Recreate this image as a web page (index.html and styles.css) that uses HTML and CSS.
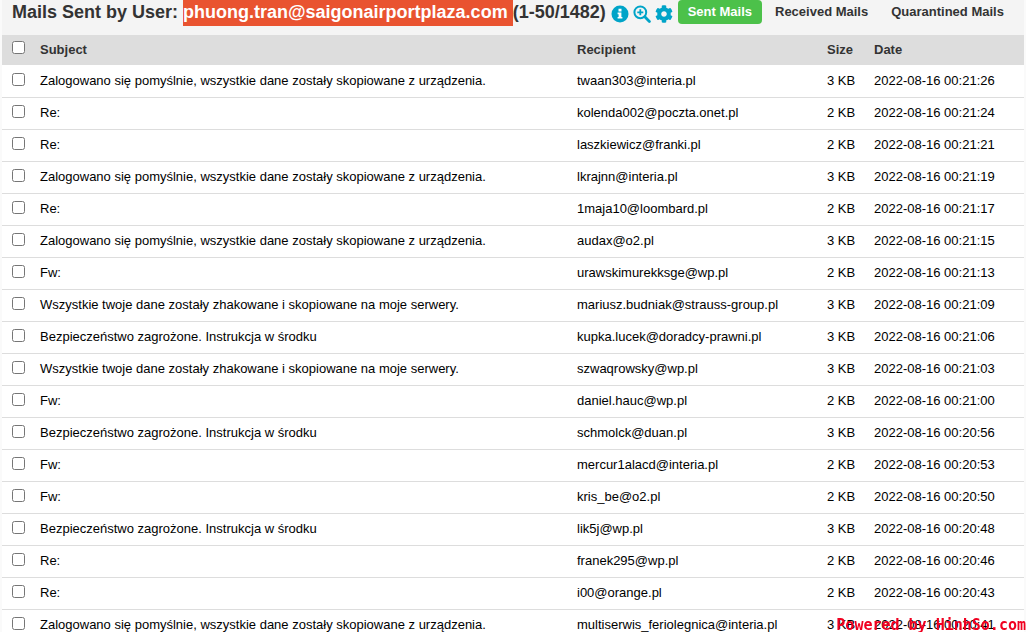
FILE: index.html
```html
<!DOCTYPE html>
<html lang="en">
<head>
    <meta charset="UTF-8">
    <meta name="viewport" content="width=device-width, initial-scale=1.0">
    <title>Mails Sent by User</title>
    <link rel="stylesheet" href="styles.css">
</head>
<body>
    <div class="container">
        <header class="toolbar">
            <h1>Mails Sent by User: <mark>phuong.tran@saigonairportplaza.com </mark>(1-50/1482)</h1>
            <div class="tools">
                <button type="button" aria-label="Information">
                    <svg viewBox="0 0 18 18"><circle cx="9" cy="9" r="8.5" fill="#00a4c8"/><path d="M7.5 3.8h3v2.6h-3zM6.6 7.6h3.8v4.3h1v1.7H6.600v-1.7h1V9.300h-1z" fill="#fff"/></svg>
                </button>
                <button type="button" aria-label="Search">
                    <svg viewBox="0 0 18 18" fill="none" stroke="#00a4c8"><circle cx="7.3" cy="7.3" r="5.9" stroke-width="2"/><path d="M11.8 11.8l4.6 4.6" stroke-width="2.8" stroke-linecap="round"/><path d="M4.3 7.3h6M7.3 4.3v6" stroke-width="1.8"/></svg>
                </button>
                <button type="button" aria-label="Settings">
                    <svg viewBox="0 0 512 512"><path fill="#00a4c8" d="M487.400 315.700l-42.600-24.600c4.300-23.200 4.300-47 0-70.200l42.600-24.600c4.900-2.800 7.100-8.600 5.500-14-11.100-35.600-30-67.800-54.700-94.600-3.800-4.100-10-5.100-14.800-2.300L380.800 110c-17.900-15.400-38.500-27.300-60.800-35.100V25.800c0-5.600-3.900-10.500-9.400-11.700-36.700-8.200-74.300-7.800-109.200 0-5.500 1.200-9.400 6.100-9.400 11.700V75c-22.200 7.900-42.800 19.800-60.800 35.100L88.700 85.500c-4.900-2.800-11-1.900-14.800 2.300-24.700 26.700-43.600 58.900-54.700 94.600-1.700 5.400.6 11.200 5.500 14L67.300 221c-4.300 23.200-4.300 47 0 70.200l-42.600 24.600c-4.900 2.800-7.100 8.600-5.500 14 11.100 35.600 30 67.800 54.700 94.600 3.800 4.100 10 5.100 14.800 2.300l42.600-24.600c17.900 15.400 38.500 27.300 60.800 35.100v49.200c0 5.600 3.900 10.500 9.400 11.700 36.700 8.200 74.300 7.800 109.200 0 5.500-1.200 9.400-6.100 9.400-11.700v-49.200c22.200-7.900 42.800-19.800 60.800-35.100l42.600 24.600c4.900 2.800 11 1.900 14.800-2.300 24.700-26.700 43.600-58.900 54.700-94.600 1.500-5.500-.7-11.300-5.600-14.100zM256 336c-44.100 0-80-35.900-80-80s35.900-80 80-80 80 35.900 80 80-35.900 80-80 80z"/></svg>
                </button>
            </div>
            <nav class="tabs">
                <a class="active" href="#sent">Sent Mails</a>
                <a href="#received">Received Mails</a>
                <a href="#quarantined">Quarantined Mails</a>
            </nav>
        </header>

        <table class="mails">
            <thead>
                <tr>
                    <th class="col-check"><input type="checkbox" aria-label="Select all"></th>
                    <th>Subject</th>
                    <th class="col-recipient">Recipient</th>
                    <th class="col-size">Size</th>
                    <th class="col-date">Date</th>
                </tr>
            </thead>
            <tbody>
                <tr><td><input type="checkbox" aria-label="Select mail 1"></td><td>Zalogowano się pomyślnie, wszystkie dane zostały skopiowane z urządzenia.</td><td>twaan303@interia.pl</td><td>3 KB</td><td>2022-08-16 00:21:26</td></tr>
                <tr><td><input type="checkbox" aria-label="Select mail 2"></td><td>Re:</td><td>kolenda002@poczta.onet.pl</td><td>2 KB</td><td>2022-08-16 00:21:24</td></tr>
                <tr><td><input type="checkbox" aria-label="Select mail 3"></td><td>Re:</td><td>laszkiewicz@franki.pl</td><td>2 KB</td><td>2022-08-16 00:21:21</td></tr>
                <tr><td><input type="checkbox" aria-label="Select mail 4"></td><td>Zalogowano się pomyślnie, wszystkie dane zostały skopiowane z urządzenia.</td><td>lkrajnn@interia.pl</td><td>3 KB</td><td>2022-08-16 00:21:19</td></tr>
                <tr><td><input type="checkbox" aria-label="Select mail 5"></td><td>Re:</td><td>1maja10@loombard.pl</td><td>2 KB</td><td>2022-08-16 00:21:17</td></tr>
                <tr><td><input type="checkbox" aria-label="Select mail 6"></td><td>Zalogowano się pomyślnie, wszystkie dane zostały skopiowane z urządzenia.</td><td>audax@o2.pl</td><td>3 KB</td><td>2022-08-16 00:21:15</td></tr>
                <tr><td><input type="checkbox" aria-label="Select mail 7"></td><td>Fw:</td><td>urawskimurekksge@wp.pl</td><td>2 KB</td><td>2022-08-16 00:21:13</td></tr>
                <tr><td><input type="checkbox" aria-label="Select mail 8"></td><td>Wszystkie twoje dane zostały zhakowane i skopiowane na moje serwery.</td><td>mariusz.budniak@strauss-group.pl</td><td>3 KB</td><td>2022-08-16 00:21:09</td></tr>
                <tr><td><input type="checkbox" aria-label="Select mail 9"></td><td>Bezpieczeństwo zagrożone. Instrukcja w środku</td><td>kupka.lucek@doradcy-prawni.pl</td><td>3 KB</td><td>2022-08-16 00:21:06</td></tr>
                <tr><td><input type="checkbox" aria-label="Select mail 10"></td><td>Wszystkie twoje dane zostały zhakowane i skopiowane na moje serwery.</td><td>szwaqrowsky@wp.pl</td><td>3 KB</td><td>2022-08-16 00:21:03</td></tr>
                <tr><td><input type="checkbox" aria-label="Select mail 11"></td><td>Fw:</td><td>daniel.hauc@wp.pl</td><td>2 KB</td><td>2022-08-16 00:21:00</td></tr>
                <tr><td><input type="checkbox" aria-label="Select mail 12"></td><td>Bezpieczeństwo zagrożone. Instrukcja w środku</td><td>schmolck@duan.pl</td><td>3 KB</td><td>2022-08-16 00:20:56</td></tr>
                <tr><td><input type="checkbox" aria-label="Select mail 13"></td><td>Fw:</td><td>mercur1alacd@interia.pl</td><td>2 KB</td><td>2022-08-16 00:20:53</td></tr>
                <tr><td><input type="checkbox" aria-label="Select mail 14"></td><td>Fw:</td><td>kris_be@o2.pl</td><td>2 KB</td><td>2022-08-16 00:20:50</td></tr>
                <tr><td><input type="checkbox" aria-label="Select mail 15"></td><td>Bezpieczeństwo zagrożone. Instrukcja w środku</td><td>lik5j@wp.pl</td><td>3 KB</td><td>2022-08-16 00:20:48</td></tr>
                <tr><td><input type="checkbox" aria-label="Select mail 16"></td><td>Re:</td><td>franek295@wp.pl</td><td>2 KB</td><td>2022-08-16 00:20:46</td></tr>
                <tr><td><input type="checkbox" aria-label="Select mail 17"></td><td>Re:</td><td>i00@orange.pl</td><td>2 KB</td><td>2022-08-16 00:20:43</td></tr>
                <tr><td><input type="checkbox" aria-label="Select mail 18"></td><td>Zalogowano się pomyślnie, wszystkie dane zostały skopiowane z urządzenia.</td><td>multiserwis_feriolegnica@interia.pl</td><td>3 KB</td><td>2022-08-16 00:20:41</td></tr>
            </tbody>
        </table>
    </div>
    <div class="watermark">Powered by HinhSo.com</div>
</body>
</html>
```
FILE: styles.css
```css
* {
    box-sizing: border-box;
}
body {
    font-family: "Liberation Sans", Arial, sans-serif;
    font-size: 13px;
    margin: 0;
    padding: 0 2px;
    height: 100vh;
    overflow: hidden;
    background-color: #fafafa;
    color: #000;
}
.container {
    background-color: #fff;
}
.toolbar {
    display: flex;
    align-items: flex-start;
    height: 35px;
    padding-left: 10px;
    background-color: #f4f4f4;
    white-space: nowrap;
}
.toolbar h1 {
    margin: 0;
    font-size: 18px;
    line-height: 24px;
    color: #333;
}
.toolbar mark {
    padding: 3px 0 4px;
    background-color: #e95330;
    color: #fff;
    white-space: pre;
}
.tools {
    display: flex;
    gap: 4px;
    padding: 5px 5px 0;
}
.tools button {
    width: 18px;
    height: 18px;
    padding: 0;
    border: 0;
    background: none;
    cursor: pointer;
}
.tools svg {
    display: block;
    width: 18px;
    height: 18px;
}
.tabs {
    display: flex;
    gap: 3px;
}
.tabs a {
    padding: 0 10px;
    border-radius: 4px;
    font-weight: bold;
    line-height: 24px;
    color: #333;
    text-decoration: none;
}
.tabs .active {
    background-color: #4cc14a;
    color: #fff;
}
.mails {
    width: 100%;
    table-layout: fixed;
    border-collapse: separate;
    border-spacing: 0;
}
.mails th,
.mails td {
    height: 32px;
    padding: 0 0 2px 10px;
    border-bottom: 1px solid #ddd;
    text-align: left;
    white-space: nowrap;
}
.mails th {
    height: 31px;
    border-bottom-color: #fff;
    background-color: #ddd;
    background-clip: padding-box;
    color: #333;
}
.mails input {
    display: block;
    width: 13px;
    height: 13px;
    margin: 0 0 3px;
}
.col-check {
    width: 28px;
}
.col-recipient {
    width: 250px;
}
.col-size {
    width: 47px;
}
.col-date {
    width: 160px;
}
.watermark {
    position: fixed;
    right: 0;
    bottom: 0;
    font: bold 15px/14px "DejaVu Sans Mono", monospace;
    color: #f00020;
}
```
